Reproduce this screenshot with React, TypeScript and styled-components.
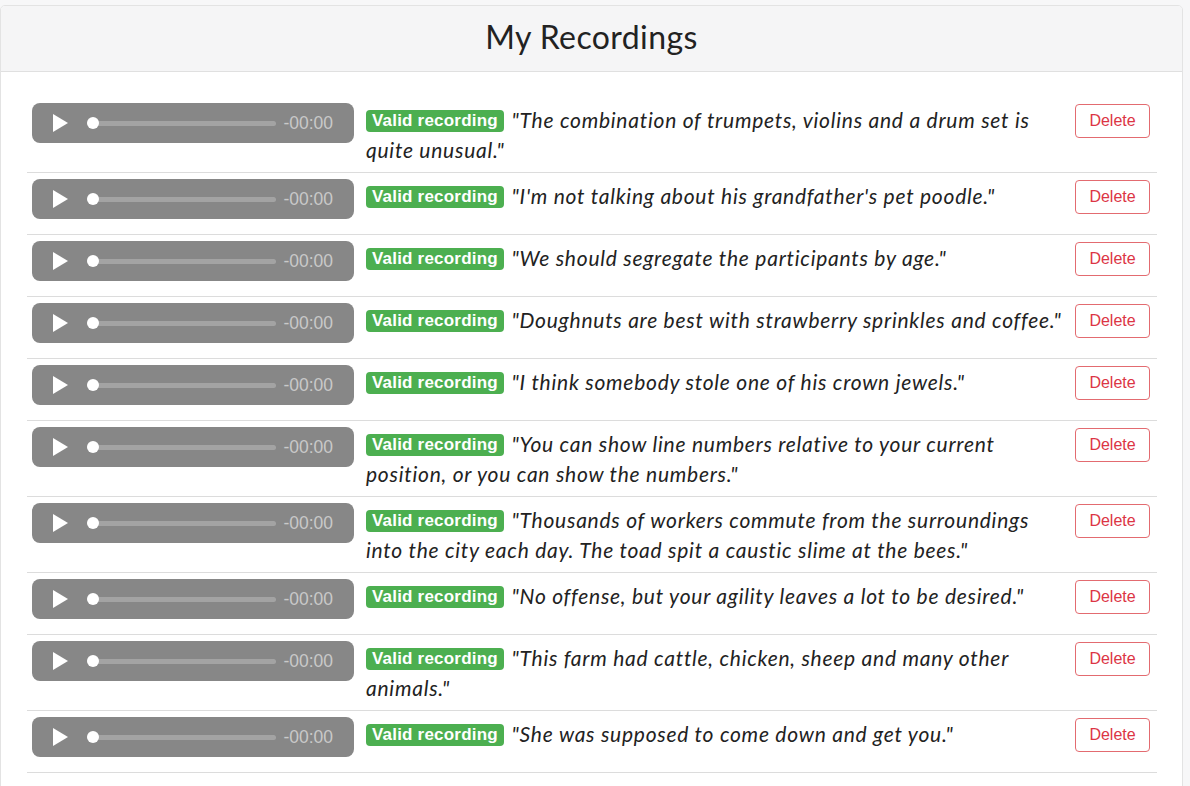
import React from "react"
import styled, { createGlobalStyle } from "styled-components"

const GlobalStyle = createGlobalStyle`
  html, body {
    margin: 0;
    padding: 0;
    background: #f7f7f8;
  }
  #root {
    padding: 5px 7px 0 0;
  }
`

const SCard = styled.div`
  width: 1183px;
  box-sizing: border-box;
  background: #ffffff;
  border: 1px solid #e3e3e3;
  border-radius: 5px;
  overflow: hidden;
`

const SHeader = styled.div`
  height: 66px;
  box-sizing: border-box;
  padding-bottom: 4px;
  background: #f5f5f6;
  border-bottom: 1px solid #e0e0e0;
  display: flex;
  align-items: center;
  justify-content: center;
`

const STitle = styled.h2`
  margin: 0;
  font-family: "Lato", "Open Sans", sans-serif;
  font-weight: 400;
  font-size: 32px;
  letter-spacing: 0.4px;
  color: #222;
`

const SBody = styled.div`
  padding: 25px 25px 24px 26px;
`

const SRow = styled.div`
  display: flex;
  align-items: flex-start;
  padding: 5px 6px 7px 5px;
  border-bottom: 1px solid #dcdcdc;
`

const SPlayer = styled.div`
  flex: 0 0 auto;
  width: 322px;
  height: 40px;
  margin: 1px 0 8px;
  border-radius: 8px;
  background: #878787;
  display: flex;
  align-items: center;
  padding: 0 21px;
  box-sizing: border-box;
`

const STrack = styled.div`
  position: relative;
  flex: 1;
  height: 5px;
  margin: 0 7px 0 19px;
  border-radius: 3px;
  background: #a3a3a3;
`

const SThumb = styled.span`
  position: absolute;
  left: 0;
  top: 50%;
  width: 12px;
  height: 12px;
  margin-top: -6px;
  border-radius: 50%;
  background: #ffffff;
`

const STime = styled.span`
  font-family: "Liberation Sans", Arial, sans-serif;
  font-size: 17.5px;
  color: #c9c9c9;
`

const SContent = styled.div`
  flex: 1;
  margin: 3px 0 0 12px;
  font-family: "Lato", "Open Sans", sans-serif;
  font-style: italic;
  font-size: 21px;
  letter-spacing: 0.75px;
  line-height: 30px;
  color: #222;
`

const SBadge = styled.span`
  display: inline-block;
  margin-right: 2px;
  padding: 0 6px;
  height: 22px;
  line-height: 22px;
  vertical-align: 2px;
  border-radius: 4px;
  background: #4caf50;
  color: #fff;
  font-family: "Liberation Sans", Arial, sans-serif;
  font-style: normal;
  font-weight: 700;
  font-size: 17px;
  letter-spacing: 0.2px;
`

const SDelete = styled.button`
  flex: 0 0 auto;
  margin: 2px 1px 0 8px;
  width: 75px;
  height: 34px;
  background: #fff;
  border: 1px solid #e36b70;
  border-radius: 4px;
  color: #dc3545;
  font-family: "Liberation Sans", Arial, sans-serif;
  font-size: 16px;
  padding: 0;
`

const recordings = [
  "The combination of trumpets, violins and a drum set is quite unusual.",
  "I'm not talking about his grandfather's pet poodle.",
  "We should segregate the participants by age.",
  "Doughnuts are best with strawberry sprinkles and coffee.",
  "I think somebody stole one of his crown jewels.",
  "You can show line numbers relative to your current position, or you can show the numbers.",
  "Thousands of workers commute from the surroundings into the city each day. The toad spit a caustic slime at the bees.",
  "No offense, but your agility leaves a lot to be desired.",
  "This farm had cattle, chicken, sheep and many other animals.",
  "She was supposed to come down and get you.",
]

const PlayIcon = () => (
  <svg width="15" height="18" viewBox="0 0 15 18">
    <path d="M0 0 L15 9 L0 18 Z" fill="#fff" />
  </svg>
)

const Player = () => (
  <SPlayer>
    <PlayIcon />
    <STrack>
      <SThumb />
    </STrack>
    <STime>-00:00</STime>
  </SPlayer>
)

const App = () => {
  return (
    <>
      <GlobalStyle />
      <SCard>
        <SHeader>
          <STitle>My Recordings</STitle>
        </SHeader>
        <SBody>
          {recordings.map((text, index) => (
            <SRow key={index}>
              <Player />
              <SContent>
                <SBadge>Valid recording</SBadge> "{text}"
              </SContent>
              <SDelete>Delete</SDelete>
            </SRow>
          ))}
        </SBody>
      </SCard>
    </>
  )
}

export default App
